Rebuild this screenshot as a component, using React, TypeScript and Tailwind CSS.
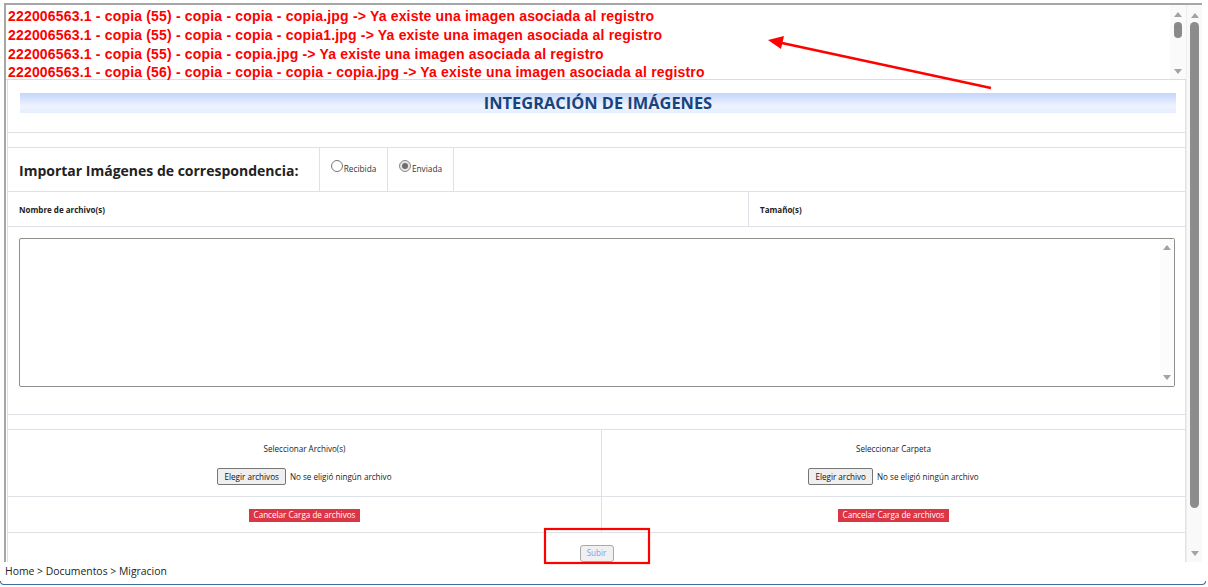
import React from "react";

const msgs = [
  "222006563.1 - copia (55) - copia - copia - copia.jpg -> Ya existe una imagen asociada al registro",
  "222006563.1 - copia (55) - copia - copia - copia1.jpg -> Ya existe una imagen asociada al registro",
  "222006563.1 - copia (55) - copia - copia.jpg -> Ya existe una imagen asociada al registro",
  "222006563.1 - copia (56) - copia - copia - copia - copia.jpg -> Ya existe una imagen asociada al registro",
];

function UpArrow({ className = "" }: { className?: string }) {
  return (
    <svg width="8" height="5" viewBox="0 0 8 5" className={className}>
      <path d="M0 5 L4 0 L8 5 Z" fill="#a3a3a3" />
    </svg>
  );
}
function DownArrow({ className = "" }: { className?: string }) {
  return (
    <svg width="8" height="5" viewBox="0 0 8 5" className={className}>
      <path d="M0 0 L4 5 L8 0 Z" fill="#a3a3a3" />
    </svg>
  );
}

function FileInput({ label }: { label: string }) {
  return (
    <div className="flex items-center">
      <div className="h-[17px] px-[6px] border border-[#767676] bg-[#efefef] rounded-[2px] flex items-center text-[8.1px] text-[#111]">
        {label}
      </div>
      <span className="ml-[4px] text-[8.1px] text-[#222]">No se eligió ningún archivo</span>
    </div>
  );
}

function CancelBtn() {
  return (
    <div className="h-[13px] w-[111px] bg-[#dc3545] text-white text-[8.1px] flex items-center justify-center">
      Cancelar Carga de archivos
    </div>
  );
}

export default function App() {
  return (
    <div className="w-[1208px] h-[587px] bg-white relative overflow-hidden font-['Open_Sans',sans-serif] text-[#212529]">
      <div className="ml-[4px] mt-[3px] w-[1198px] h-[559px] border-t-2 border-l-2 border-[#a6a6a6] flex">
        <div className="w-[1180px] flex flex-col overflow-hidden">
          {/* Messages */}
          <div className="h-[75px] shrink-0 flex border-b border-[#dcdcdc]">
            <div className="flex-1 pl-[2px] pt-[2px] font-['Liberation_Sans',Arial,sans-serif] font-bold text-[14px] tracking-[0.18px] leading-[18.8px] text-[#ff0000]">
              {msgs.map((m, i) => (
                <div key={i} className="whitespace-nowrap">{m}</div>
              ))}
            </div>
            <div className="w-[16px] bg-[#fafafa] flex flex-col items-center pt-[7px] pb-[5px]">
              <UpArrow />
              <div className="mt-[5px] w-[8px] h-[16px] rounded-full bg-[#8a8a8a]" />
              <div className="flex-1" />
              <DownArrow />
            </div>
          </div>

          {/* Main panel */}
          <div className="ml-[1px] w-[1179px] border-r border-l border-[#dee2e6] flex flex-col">
            {/* Title row */}
            <div className="h-[53px] shrink-0 border-b border-[#dee2e6] pt-[13px] px-[12px]">
              <div className="h-[20px] w-[1156px] bg-[linear-gradient(to_bottom,#c2d5fb,#eef3fe_65%,#e6eefd)] flex items-center justify-center">
                <span className="font-bold text-[16.4px] text-[#17447f]">INTEGRACIÓN DE IMÁGENES</span>
              </div>
            </div>
            {/* gap */}
            <div className="h-[15px] shrink-0 border-b border-[#dee2e6]" />
            {/* Import row */}
            <div className="h-[44px] shrink-0 border-b border-[#dee2e6] flex">
              <div className="w-[312px] border-r border-[#dee2e6] flex items-center pl-[11px] pt-[2px]">
                <span className="font-bold text-[14px] text-[#222]">Importar Imágenes de correspondencia:</span>
              </div>
              <div className="w-[68px] border-r border-[#dee2e6] flex items-start justify-center pt-[12px]">
                <div className="flex items-start">
                  <div className="w-[12px] h-[12px] rounded-full border border-[#767676] bg-white" />
                  <span className="ml-[1px] mt-[3px] text-[8.3px] text-[#333]">Recibida</span>
                </div>
              </div>
              <div className="w-[66px] border-r border-[#dee2e6] flex items-start justify-center pt-[12px]">
                <div className="flex items-start">
                  <div className="w-[12px] h-[12px] rounded-full border border-[#8a8a8a] bg-[#e6e6e6] flex items-center justify-center">
                    <div className="w-[6px] h-[6px] rounded-full bg-[#6e6e6e]" />
                  </div>
                  <span className="ml-[1px] mt-[3px] text-[8.3px] text-[#333]">Enviada</span>
                </div>
              </div>
              <div className="flex-1" />
            </div>
            {/* header row */}
            <div className="h-[35px] shrink-0 border-b border-[#dee2e6] flex">
              <div className="w-[741px] border-r border-[#dee2e6] flex items-center pl-[11px] pt-[1px]">
                <span className="font-bold text-[8px] text-[#222]">Nombre de archivo(s)</span>
              </div>
              <div className="flex-1 flex items-center pl-[11px] pt-[1px]">
                <span className="font-bold text-[8px] text-[#222]">Tamaño(s)</span>
              </div>
            </div>
            {/* textarea row */}
            <div className="h-[188px] shrink-0 border-b border-[#dee2e6] pt-[11px] pl-[11px]">
              <div className="w-[1156px] h-[149px] border border-[#8f8f8f] rounded-[2px] flex justify-end">
                <div className="w-[14px] flex flex-col items-center pt-[6px] pb-[6px] bg-[#fcfcfc]">
                  <UpArrow />
                  <div className="flex-1" />
                  <DownArrow />
                </div>
              </div>
            </div>
            {/* gap */}
            <div className="h-[15px] shrink-0 border-b border-[#dee2e6]" />
            {/* file row */}
            <div className="h-[67px] shrink-0 border-b border-[#dee2e6] flex">
              <div className="w-[594px] border-r border-[#dee2e6] flex flex-col items-center pt-[13px]">
                <span className="text-[8.1px] text-[#222]">Seleccionar Archivo(s)</span>
                <div className="mt-[13px]"><FileInput label="Elegir archivos" /></div>
              </div>
              <div className="flex-1 flex flex-col items-center pt-[13px]">
                <span className="text-[8.1px] text-[#222]">Seleccionar Carpeta</span>
                <div className="mt-[13px]"><FileInput label="Elegir archivo" /></div>
              </div>
            </div>
            {/* cancel row */}
            <div className="h-[36px] shrink-0 border-b border-[#dee2e6] flex">
              <div className="w-[594px] border-r border-[#dee2e6] flex items-center justify-center pt-[1px]">
                <CancelBtn />
              </div>
              <div className="flex-1 flex items-center justify-center pt-[1px]">
                <CancelBtn />
              </div>
            </div>
            {/* subir row */}
            <div className="h-[40px] shrink-0 flex justify-center pt-[12px]">
              <div className="h-[17px] w-[34px] border border-[#a9a9a9] bg-[#f0f0f0] rounded-[3px] flex items-center justify-center text-[8.1px] text-[#7b9ff0]">
                Subir
              </div>
            </div>
          </div>
        </div>
        {/* outer scrollbar */}
        <div className="w-[16px] bg-[#f9f9f9] border-l border-[#eeeeee] flex flex-col items-center pt-[8px] pb-[6px]">
          <UpArrow />
          <div className="mt-[4px] w-[9px] h-[486px] rounded-full bg-[#8c8c8c]" />
          <div className="flex-1" />
          <DownArrow />
        </div>
      </div>

      {/* breadcrumb */}
      <div className="pl-[5px] h-[19px] pt-[1px] flex items-center text-[10.4px] text-[#222]">
        Home &gt; Documentos &gt; Migracion
      </div>
      <div className="w-[1206px] h-[4px] border-b-[1.5px] border-l border-r border-[#3f6e94] rounded-b-[6px] border-t-0" />

      {/* annotations */}
      <svg className="absolute left-0 top-0 pointer-events-none" width="1208" height="587">
        <line x1="991" y1="88" x2="782" y2="43" stroke="#ff0000" strokeWidth="2.5" />
        <polygon points="768,40 784,36 781,49" fill="#ff0000" />
        <rect x="545" y="529" width="104" height="34" fill="none" stroke="#ff0000" strokeWidth="2.2" />
      </svg>
    </div>
  );
}
